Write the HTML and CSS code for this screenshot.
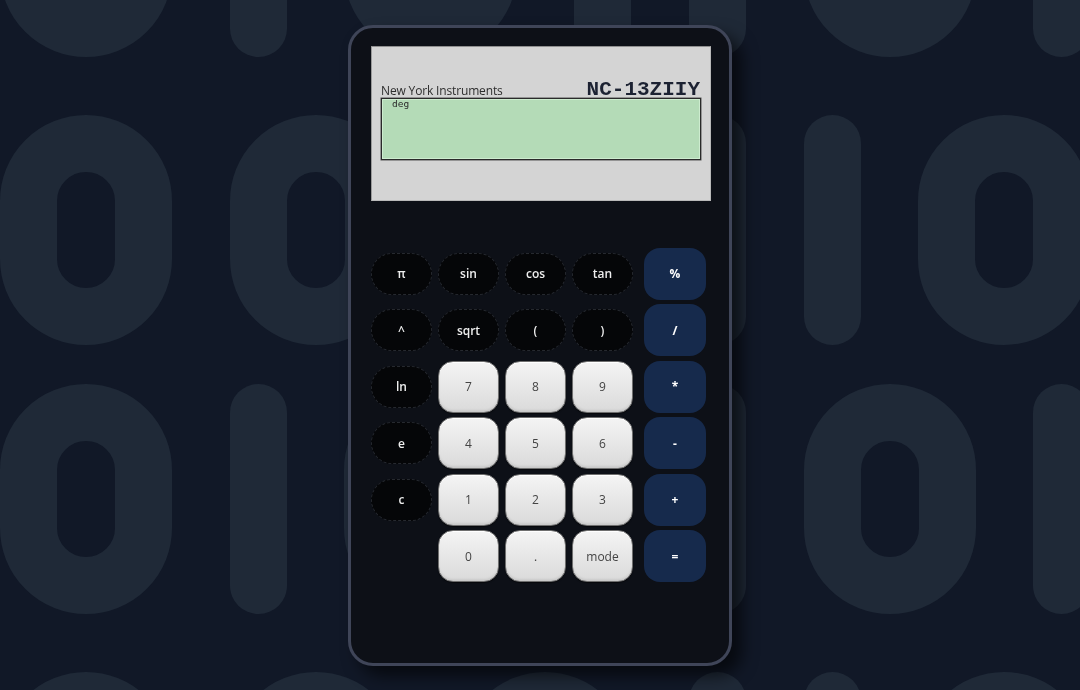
FILE: index.html
```html
<!DOCTYPE html>
<html lang="en">
<head>
<meta charset="utf-8">
<title>NC-13ZIIY Calculator</title>
<link rel="stylesheet" href="styles.css">
</head>
<body>
<div class="bg" aria-hidden="true">
  <div class="bg-row">
    <span class="d0"></span><span class="d1"></span><span class="d0"></span><span class="d1"></span><span class="d1"></span><span class="d0"></span><span class="d1"></span>
  </div>
  <div class="bg-row">
    <span class="d0"></span><span class="d0"></span><span class="d0"></span><span class="d1"></span><span class="d1"></span><span class="d0"></span>
  </div>
  <div class="bg-row bg-row-tight">
    <span class="d0"></span><span class="d1"></span><span class="d0"></span><span class="d1"></span><span class="d1"></span><span class="d0"></span><span class="d1"></span>
  </div>
  <div class="bg-row">
    <span class="d0"></span><span class="d0"></span><span class="d0"></span><span class="d1"></span><span class="d1"></span><span class="d0"></span>
  </div>
</div>

<main class="stage">
  <div class="calc">
    <div class="display">
      <div class="display-head">
        <span class="brand">New York Instruments</span>
        <span class="model">NC-13ZIIY</span>
      </div>
      <div class="lcd"><span class="angle">deg</span></div>
    </div>

    <div class="keypad">
      <button class="key fn">π</button>
      <button class="key fn">sin</button>
      <button class="key fn">cos</button>
      <button class="key fn">tan</button>
      <button class="key op">%</button>

      <button class="key fn">^</button>
      <button class="key fn">sqrt</button>
      <button class="key fn">(</button>
      <button class="key fn">)</button>
      <button class="key op">/</button>

      <button class="key fn">ln</button>
      <button class="key num">7</button>
      <button class="key num">8</button>
      <button class="key num">9</button>
      <button class="key op">*</button>

      <button class="key fn">e</button>
      <button class="key num">4</button>
      <button class="key num">5</button>
      <button class="key num">6</button>
      <button class="key op">-</button>

      <button class="key fn">c</button>
      <button class="key num">1</button>
      <button class="key num">2</button>
      <button class="key num">3</button>
      <button class="key op">+</button>

      <span class="blank"></span>
      <button class="key num">0</button>
      <button class="key num">.</button>
      <button class="key num">mode</button>
      <button class="key op">=</button>
    </div>
  </div>
</main>
</body>
</html>
```

FILE: styles.css
```css
html, body {
  margin: 0;
  height: 100%;
}

body {
  background: #111827;
  overflow: hidden;
  font-family: "Open Sans", "Noto Sans", sans-serif;
}

/* decorative binary background */
.bg {
  position: fixed;
  left: 0;
  top: -173px;
  width: 100%;
  display: flex;
  flex-direction: column;
  gap: 58px;
  z-index: 0;
}

.bg-row {
  display: flex;
  gap: 57.4px;
  height: 230px;
  flex-shrink: 0;
}

.bg-row-tight {
  margin-top: -19px;
}

.d0 {
  flex-shrink: 0;
  box-sizing: border-box;
  width: 172.2px;
  height: 230px;
  border: 57.4px solid #1f2937;
  border-radius: 86px;
}

.d1 {
  flex-shrink: 0;
  width: 57.4px;
  height: 230px;
  border-radius: 28.7px;
  background: #1f2937;
}

/* calculator */
.stage {
  position: relative;
  z-index: 1;
  height: 100vh;
  display: flex;
  align-items: center;
  justify-content: center;
}

.calc {
  box-sizing: border-box;
  width: 384px;
  height: 641px;
  border: 3px solid #3f4558;
  border-radius: 25px;
  background: #0d1017;
  padding: 18px 0 0 20px;
  box-shadow: 10px 10px 16px rgba(0, 0, 0, 0.6);
}

.display {
  box-sizing: border-box;
  width: 340px;
  height: 155px;
  background: #d4d4d4;
  border: 1px solid #b9b9b9;
  border-top-color: #8f8f8f;
  border-left-color: #9a9a9a;
  padding: 34px 9px 0 9px;
}

.display-head {
  display: flex;
  justify-content: space-between;
  align-items: flex-end;
  height: 17px;
}

.brand {
  font-size: 12px;
  line-height: 14px;
  color: #2e2e2e;
  letter-spacing: -0.15px;
}

.model {
  font-family: "Liberation Mono", "Courier New", monospace;
  font-weight: bold;
  font-size: 21px;
  line-height: 17px;
  color: #1c2232;
  margin-right: 1px;
}

.lcd {
  box-sizing: border-box;
  height: 62px;
  background: #b4dbb7;
  border: 1px solid #2a2a2a;
  box-shadow: inset 0 0 0 1px #cdeccf, 0 0 0 0.5px #555;
  padding: 0 10px;
}

.angle {
  display: block;
  font-family: "DejaVu Sans Mono", monospace;
  font-size: 9.5px;
  line-height: 10px;
  color: #2a2a2a;
}

.keypad {
  display: grid;
  grid-template-columns: repeat(4, 61px) 67px;
  grid-auto-rows: 52px;
  column-gap: 6px;
  row-gap: 4.6px;
  margin-top: 47px;
  width: 335px;
}

.key {
  font-family: "Open Sans", "Noto Sans", sans-serif;
  font-size: 12px;
  padding: 0;
  margin: 0;
  cursor: pointer;
}

.fn {
  height: 42px;
  align-self: center;
  border-radius: 21px;
  background: #050608;
  color: #eeeeee;
  border: 1px dashed #26292f;
  font-weight: 600;
}

.num {
  border-radius: 15px;
  background: linear-gradient(#f4f4f4, #dadada);
  border: 1px solid #6f6f6f;
  color: #444;
  box-shadow: inset 0 1px 0 #ffffff, inset 0 -2px 2px rgba(0, 0, 0, 0.08), 0 1px 1px rgba(0, 0, 0, 0.5);
}

.op {
  width: 62px;
  justify-self: end;
  border: none;
  border-radius: 16px;
  background: #162a4c;
  color: #ffffff;
  font-weight: 700;
}
```
